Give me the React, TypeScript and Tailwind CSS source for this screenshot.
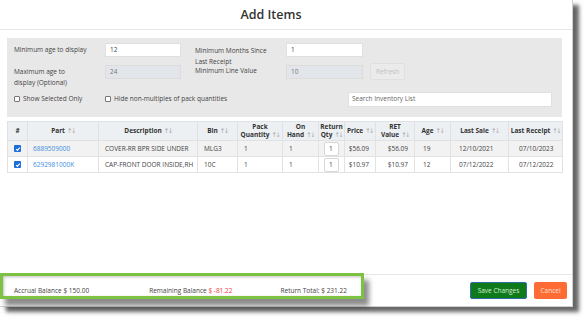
import React from 'react';

const Sort = () => <span className="ml-[2px] text-[6.5px] text-[#a8a8a8] tracking-[-1.5px] font-normal font-['DejaVu_Sans',sans-serif]">↑↓</span>;

const rows = [
  { part: '6889509000', desc: 'COVER-RR BPR SIDE UNDER', bin: 'MLG3', pack: '1', onHand: '1', qty: '1', price: '$56.09', ret: '$56.09', age: '19', lastSale: '12/10/2021', lastReceipt: '07/10/2023' },
  { part: '6292981000K', desc: 'CAP-FRONT DOOR INSIDE,RH', bin: '10C', pack: '1', onHand: '1', qty: '1', price: '$10.97', ret: '$10.97', age: '12', lastSale: '07/12/2022', lastReceipt: '07/12/2022' },
];

function Checkbox({ checked }: { checked?: boolean }) {
  if (checked) {
    return (
      <span className="inline-flex w-[7px] h-[7px] rounded-[1px] bg-[#1a6fe0] items-center justify-center">
        <svg viewBox="0 0 10 10" className="w-[6px] h-[6px]" fill="none" stroke="white" strokeWidth="2">
          <path d="M2 5.2l2 2 4-4.5" />
        </svg>
      </span>
    );
  }
  return <span className="inline-block w-[6px] h-[6px] rounded-[1px] border border-[#777] bg-white" />;
}

export default function App() {
  return (
    <div className="w-[588px] h-[322px] bg-white relative overflow-hidden text-[#444] font-['Open_Sans',sans-serif] text-[6.5px] leading-[10px]">
      {/* modal */}
      <div className="w-[573px] h-[307px] bg-white border-r border-b border-[#d0d0d0] shadow-[6px_5px_4px_rgba(0,0,0,0.6)] flex flex-col">
        <div className="h-[30px] shrink-0 flex items-center justify-center pr-[30px] border-b border-[#e6e6e6] text-[12.5px] font-semibold text-[#333]">
          Add Items
        </div>

        <div className="flex-1 flex flex-col pl-[7px] pr-[10px] pt-[8px]">
          {/* filters */}
          <div className="bg-[#e8e8e8] h-[79px] pl-[7px] pr-[10px] pt-[5px] flex flex-col">
            <div className="flex h-[14px]">
              <div className="w-[91px] pt-[2px]">Minimum age to display</div>
              <div className="w-[76px] h-[14px] bg-white border border-[#e0e0e0] pl-[4px] flex items-center">12</div>
              <div className="w-[91px] ml-[14px] pt-[2px] leading-[11px]">Minimum Months Since<br />Last Receipt</div>
              <div className="w-[77px] h-[14px] bg-white border border-[#e0e0e0] pl-[4px] flex items-center">1</div>
            </div>
            <div className="flex h-[25px] mt-[8px]">
              <div className="w-[91px] pt-[1px] leading-[11px]">Maximum age to<br />display (Optional)</div>
              <div className="w-[76px] h-[14px] bg-[#e2e6ea] border border-[#dcdcdc] pl-[4px] flex items-center text-[#777]">24</div>
              <div className="w-[91px] ml-[14px] pt-[1px]">Minimum Line Value</div>
              <div className="w-[77px] h-[14px] bg-[#e2e6ea] border border-[#dcdcdc] pl-[4px] flex items-center text-[#777]">10</div>
              <div className="ml-[7px] -mt-[2px] w-[35px] h-[17px] bg-[#ebebeb] border border-[#e0e0e0] rounded-[2px] flex items-center justify-center text-[#c0c0c0]">Refresh</div>
            </div>
            <div className="flex items-center h-[16px] mt-[1px]">
              <div className="w-[91px] flex items-center gap-[3px]"><Checkbox />Show Selected Only</div>
              <div className="flex items-center gap-[3px]"><Checkbox />Hide non-multiples of pack quantities</div>
              <div className="ml-auto w-[204px] h-[15px] bg-white border border-[#e0e0e0] pl-[3px] flex items-center text-[#666]">Search Inventory List</div>
            </div>
          </div>

          {/* table */}
          <table className="mt-[4px] w-[555px] table-fixed border-collapse border border-[#dee2e6]">
            <colgroup>
              <col className="w-[20px]" />
              <col className="w-[71px]" />
              <col className="w-[99px]" />
              <col className="w-[40px]" />
              <col className="w-[45px]" />
              <col className="w-[36px]" />
              <col className="w-[26px]" />
              <col className="w-[31px]" />
              <col className="w-[39px]" />
              <col className="w-[36px]" />
              <col className="w-[58px]" />
              <col className="w-[54px]" />
            </colgroup>
            <thead>
              <tr className="h-[19px] bg-[#edf0f3] text-[#333] font-semibold leading-[8px]">
                <th className="border border-[#dee2e6]">#</th>
                <th className="border border-[#dee2e6]">Part<Sort /></th>
                <th className="border border-[#dee2e6]">Description<Sort /></th>
                <th className="border border-[#dee2e6]">Bin<Sort /></th>
                <th className="border border-[#dee2e6]">Pack<br />Quantity<Sort /></th>
                <th className="border border-[#dee2e6]">On<br />Hand<Sort /></th>
                <th className="border border-[#dee2e6]">Return<br />Qty<Sort /></th>
                <th className="border border-[#dee2e6]">Price<Sort /></th>
                <th className="border border-[#dee2e6]">RET<br />Value<Sort /></th>
                <th className="border border-[#dee2e6]">Age<Sort /></th>
                <th className="border border-[#dee2e6]">Last Sale<Sort /></th>
                <th className="border border-[#dee2e6]">Last Receipt<Sort /></th>
              </tr>
            </thead>
            <tbody className="text-[#444]">
              {rows.map((r, i) => (
                <tr key={r.part} className={`h-[16px] ${i === 0 ? 'bg-[#f2f2f2]' : 'bg-white'}`}>
                  <td className="border border-[#e2e2e2] text-center align-middle"><span className="inline-flex align-middle"><Checkbox checked /></span></td>
                  <td className="border border-[#e2e2e2] pl-[5px] text-[#3d8ee0]">{r.part}</td>
                  <td className="border border-[#e2e2e2] pl-[6px]">{r.desc}</td>
                  <td className="border border-[#e2e2e2] pl-[6px]">{r.bin}</td>
                  <td className="border border-[#e2e2e2] pl-[6px]">{r.pack}</td>
                  <td className="border border-[#e2e2e2] pl-[6px]">{r.onHand}</td>
                  <td className="border border-[#e2e2e2] px-[5px]">
                    <div className="h-[14px] bg-white border border-[#d8d8d8] rounded-[2px] flex items-center pl-[4px]">{r.qty}</div>
                  </td>
                  <td className="border border-[#e2e2e2] pr-[6px] text-right">{r.price}</td>
                  <td className="border border-[#e2e2e2] pr-[6px] text-right">{r.ret}</td>
                  <td className="border border-[#e2e2e2] pl-[8px]">{r.age}</td>
                  <td className="border border-[#e2e2e2] pl-[8px]">{r.lastSale}</td>
                  <td className="border border-[#e2e2e2] pl-[10px]">{r.lastReceipt}</td>
                </tr>
              ))}
            </tbody>
          </table>
        </div>

        {/* footer */}
        <div className="h-[32px] shrink-0 border-t border-[#e6e6e6] flex items-center pl-[14px] pr-[5px]">
          <span>Accrual Balance $ 150.00</span>
          <span className="ml-[60px]">Remaining Balance <span className="text-[#ee3b3b]">$ -81.22</span></span>
          <span className="ml-[48px]">Return Total: $ 231.22</span>
          <div className="ml-auto flex items-center gap-[7px]">
            <div className="w-[57px] h-[17px] bg-[#0f7a19] border border-[#2f6fa8] rounded-[2px] flex items-center justify-center text-[#d6ecd6]">Save Changes</div>
            <div className="w-[33px] h-[17px] bg-[#ff6b35] rounded-[2px] flex items-center justify-center text-[#ffe0d0]">Cancel</div>
          </div>
        </div>
      </div>

      {/* highlight box over footer balances */}
      <div className="absolute left-0 top-[273px] w-[364px] h-[26px] border-[3px] border-[#7dc242] shadow-[5px_7px_5px_rgba(0,0,0,0.45),inset_1px_1px_3px_rgba(0,0,0,0.25)]" />
    </div>
  );
}
